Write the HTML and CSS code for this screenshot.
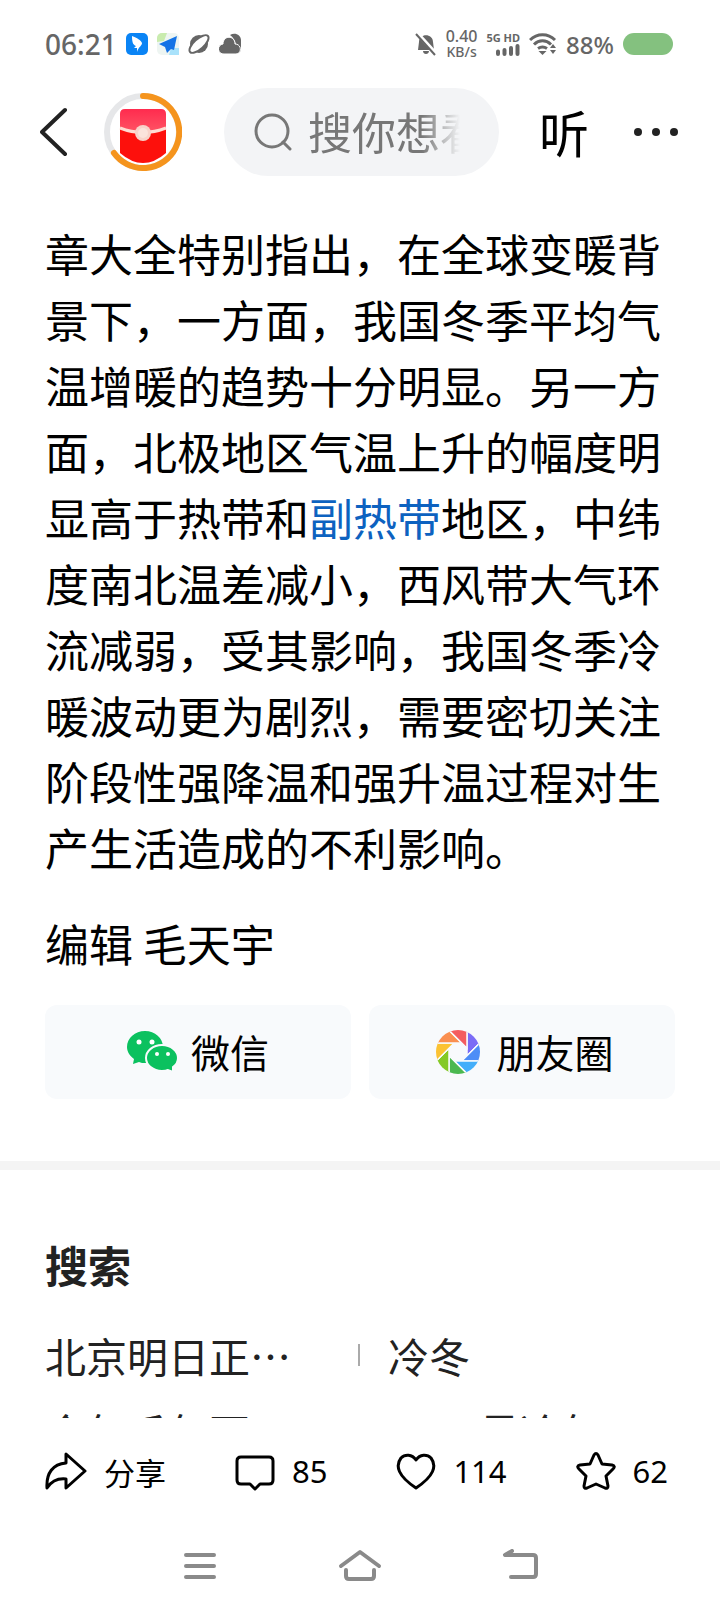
FILE: index.html
```html
<!DOCTYPE html>
<html lang="zh-CN">
<head>
    <meta charset="UTF-8">
    <meta name="viewport" content="width=device-width, initial-scale=1.0">
    <title>新闻详情</title>
    <link rel="stylesheet" href="styles.css">
</head>
<body>
    <!-- 状态栏 -->
    <div class="status-bar">
        <span class="time">06:21</span>
        <svg width="22" height="22" viewBox="0 0 22 22">
            <rect width="22" height="22" rx="5" fill="#0a84f5"/>
            <path d="M6 3c5 2 9 4 10 7 0 3-3 3-5 9l0-4-3 0 2-2c-3-1-4-4-4-10z" fill="#fff"/>
        </svg>
        <svg width="22" height="22" viewBox="0 0 22 22">
            <rect width="22" height="22" rx="5" fill="#eef5f2"/>
            <path d="M0 9V5a5 5 0 0 1 5-5h5L7 8z" fill="#c9ecae"/>
            <path d="M12 22l2-7h8v7z" fill="#a9e2fb"/>
            <path d="M20 3L2 11l6 3 2 6 4-4 3 1z" fill="#1473e6"/>
        </svg>
        <svg width="22" height="22" viewBox="0 0 22 22">
            <circle cx="11" cy="11" r="9" fill="#666"/>
            <ellipse cx="11" cy="11" rx="12" ry="5" transform="rotate(-42 11 11)" fill="#fff" stroke="#666" stroke-width="2"/>
        </svg>
        <svg width="23" height="22" viewBox="0 0 23 22">
            <path d="M11 2c5-3 11 0 11 5v12c-1-4-3-6-5-7-1-5-3-8-6-10z" fill="#666"/>
            <path d="M5 21a5 5 0 0 1-1-10c0-9 12-9 12 0 7 0 7 10 1 10z" fill="#666" stroke="#fff"/>
        </svg>
        <div class="status-right">
            <svg width="22" height="24" viewBox="0 0 22 24">
                <path d="M3 18l1-8c0-9 14-9 14 0l1 8zM8 19h6c0 4-6 4-6 0z" fill="#666"/>
                <path d="M2 1l19 21" stroke="#fff" stroke-width="4"/>
                <path d="M1 2l19 21" stroke="#666" stroke-width="2"/>
            </svg>
            <div class="speed">
                <span>0.40</span>
                <span class="unit">KB/s</span>
            </div>
            <div class="signal">
                <span>5G HD</span>
                <svg width="24" height="12" viewBox="0 0 24 12">
                    <path d="M2 7.500v2.500M8.500 6v4M15 4v6M21.500 2v8" stroke="#666" stroke-width="4" stroke-linecap="round"/>
                </svg>
            </div>
            <svg class="wifi" width="28" height="24" viewBox="0 0 28 24">
                <path d="M1 8c7-7 18-7 25 0M5 12.500c5-5 12-5 17 0M9 16.500c3-2 6-2 9 0" fill="none" stroke="#666" stroke-width="3"/>
                <path d="M9.500 19h8l-4 4zM21 16l3-4 3 4zM21 18h6l-3 4z" fill="#666"/>
            </svg>
            <span class="percent">88%</span>
            <span class="battery"></span>
        </div>
    </div>

    <!-- 顶部导航 -->
    <header class="header">
        <button class="icon-btn" aria-label="返回">
            <svg width="28" height="50" viewBox="0 0 28 50">
                <path d="M25 3L2 25l23 22" fill="none" stroke="#222" stroke-width="4" stroke-linecap="round" stroke-linejoin="round"/>
            </svg>
        </button>
        <button class="icon-btn packet" aria-label="红包">
            <svg width="78" height="78" viewBox="0 0 78 78">
                <defs>
                    <linearGradient id="flap" x1="0" y1="0" x2="0" y2="1">
                        <stop offset="0" stop-color="#ff2b4e"/>
                        <stop offset="1" stop-color="#ff5565"/>
                    </linearGradient>
                </defs>
                <circle cx="39" cy="39" r="36" fill="#fff" stroke="#e6e7e9" stroke-width="6"/>
                <path d="M39 3a36 36 0 1 1-29 57" fill="none" stroke="#f5941d" stroke-width="6" stroke-linecap="round"/>
                <path d="M16 35h46v25q-23 20-46 0z" fill="#fd100c"/>
                <path d="M16 21q0-5 5-5h36q5 0 5 5v15q-23 8-46 0z" fill="url(#flap)"/>
                <path d="M16 35q23 9 46 0" fill="none" stroke="#ffdcd2" stroke-width="3"/>
                <circle cx="39" cy="40" r="8" fill="#f8d3ca"/>
                <circle cx="39" cy="40" r="5" fill="#fbe3dc"/>
            </svg>
        </button>
        <label class="search">
            <svg width="38" height="38" viewBox="0 0 38 38">
                <circle cx="18" cy="18" r="16" fill="none" stroke="#777" stroke-width="3"/>
                <path d="M29 29l7 7" stroke="#777" stroke-width="3" stroke-linecap="round"/>
            </svg>
            <input type="text" placeholder="搜你想看的" aria-label="搜索">
        </label>
        <button class="listen">听</button>
        <button class="icon-btn" aria-label="更多">
            <svg width="46" height="10" viewBox="0 0 46 10">
                <circle cx="5" cy="5" r="4" fill="#222"/>
                <circle cx="23" cy="5" r="4" fill="#222"/>
                <circle cx="41" cy="5" r="4" fill="#222"/>
            </svg>
        </button>
    </header>

    <!-- 正文 -->
    <main class="content">
        <article class="article">
            <p>章大全特别指出，在全球变暖背景下，一方面，我国冬季平均气温增暖的趋势十分明显。另一方面，北极地区气温上升的幅度明显高于热带和<a href="#">副热带</a>地区，中纬度南北温差减小，西风带大气环流减弱，受其影响，我国冬季冷暖波动更为剧烈，需要密切关注阶段性强降温和强升温过程对生产生活造成的不利影响。</p>
            <p>编辑 毛天宇</p>
        </article>

        <div class="share">
            <button class="share-btn">
                <svg width="52" height="42" viewBox="0 0 52 42">
                    <path d="M18 0c10 0 18 7 18 16s-8 16-18 16c-2 0-4 0-6-1l-6 2 1-5C3 25 0 21 0 16 0 7 8 0 18 0z" fill="#0bc15f"/>
                    <path d="M35 14c9 0 16 6 16 13 0 4-2 7-5 9l0 5-5-2c-2 1-4 1-6 1-9 0-16-6-16-13s7-13 16-13z" fill="#0bc15f" stroke="#f8fafc" stroke-width="2"/>
                    <g fill="#fff">
                        <circle cx="12" cy="11" r="2.500"/>
                        <circle cx="25" cy="11" r="2.500"/>
                        <circle cx="30" cy="23" r="2"/>
                        <circle cx="41" cy="23" r="2"/>
                    </g>
                </svg>
                <span>微信</span>
            </button>
            <button class="share-btn moments">
                <svg width="44" height="44" viewBox="-22 -22 44 44">
                    <defs>
                        <clipPath id="lens"><circle r="22"/></clipPath>
                        <path id="blade" d="M9 3.700V-30H34V-21.300z"/>
                    </defs>
                    <g clip-path="url(#lens)" stroke="#f8fafc" stroke-width="1.500">
                        <use href="#blade" fill="#7b6cf6"/>
                        <use href="#blade" fill="#4d8df7" transform="rotate(45)"/>
                        <use href="#blade" fill="#43aefa" transform="rotate(90)"/>
                        <use href="#blade" fill="#4bb850" transform="rotate(135)"/>
                        <use href="#blade" fill="#85c926" transform="rotate(180)"/>
                        <use href="#blade" fill="#fbc233" transform="rotate(225)"/>
                        <use href="#blade" fill="#fa8f50" transform="rotate(270)"/>
                        <use href="#blade" fill="#f45d60" transform="rotate(315)"/>
                    </g>
                </svg>
                <span>朋友圈</span>
            </button>
        </div>

        <section class="related">
            <h2>搜索</h2>
            <div class="related-list">
                <a href="#">北京明日正⋯</a>
                <a href="#">冷冬</a>
                <a href="#">今年千年不⋯</a>
                <a href="#">2025最冷年</a>
            </div>
        </section>
    </main>

    <!-- 底部操作栏 -->
    <footer class="footer">
        <div class="actions">
            <button class="action">
                <svg width="42" height="40" viewBox="0 0 42 40">
                    <path d="M21 3l19 17-19 17v-9C12 27 6 31 2 37 1 22 8 13 21 12z"/>
                </svg>
                分享
            </button>
            <button class="action">
                <svg width="40" height="40" viewBox="0 0 40 40">
                    <path d="M6 6h28q4 0 4 4v19q0 4-4 4h-9l-5 5-5-5H6q-4 0-4-4V10q0-4 4-4z"/>
                </svg>
                85
            </button>
            <button class="action">
                <svg width="40" height="40" viewBox="0 0 40 40">
                    <path d="M20 9C16 3 9 3 5 7-1 15 2 25 20 37 38 25 41 15 35 7 31 3 24 3 20 9z"/>
                </svg>
                114
            </button>
            <button class="action">
                <svg width="40" height="40" viewBox="0 0 40 40">
                    <path d="M18 4q2-3 4 0l4 9 10 1q4 1 1 4l-7 7 2 10q0 3-3 2l-9-4-9 4q-3 1-3-2l2-10-7-7q-3-3 1-4l10-1z"/>
                </svg>
                62
            </button>
        </div>
        <nav class="system-nav">
            <button class="icon-btn" aria-label="最近任务">
                <svg width="34" height="34" viewBox="0 0 34 34">
                    <path d="M3 6h28M3 17h28M3 28h28"/>
                </svg>
            </button>
            <button class="icon-btn" aria-label="主页">
                <svg width="44" height="36" viewBox="0 0 44 36">
                    <path d="M3 18L22 4l19 14M8 22v6q0 3 3 3h22q3 0 3-3v-6"/>
                </svg>
            </button>
            <button class="icon-btn" aria-label="返回上一页">
                <svg width="36" height="34" viewBox="0 0 36 34">
                    <path d="M10 2L3 6h28q3 0 3 3v16q0 3-3 3H9"/>
                </svg>
            </button>
        </nav>
    </footer>
</body>
</html>
```
FILE: styles.css
```css
* {
    box-sizing: border-box;
}
body {
    font-family: "Noto Sans CJK SC", sans-serif;
    margin: 0;
    background-color: #fff;
    color: #000;
    display: flex;
    flex-direction: column;
    height: 100vh;
    overflow: hidden;
}
button {
    border: none;
    background: none;
    padding: 0;
    font-family: inherit;
    color: inherit;
    cursor: pointer;
}
a {
    text-decoration: none;
}
svg {
    display: block;
    flex-shrink: 0;
}
.icon-btn {
    display: flex;
    align-items: center;
    justify-content: center;
}

/* Barra de estado */
.status-bar {
    display: flex;
    align-items: center;
    gap: 9px;
    height: 88px;
    padding: 0 47px 0 45px;
    font-family: "Noto Sans", sans-serif;
    color: #666;
}
.time {
    font-size: 28px;
    font-weight: 500;
}
.status-right {
    display: flex;
    align-items: center;
    gap: 9px;
    margin-left: auto;
}
.speed {
    display: flex;
    flex-direction: column;
    align-items: center;
    font-size: 16px;
    font-weight: 500;
    line-height: 16px;
}
.unit {
    font-size: 14px;
}
.signal {
    display: flex;
    flex-direction: column;
    align-items: flex-end;
    font-size: 11px;
    font-weight: 700;
    line-height: 12px;
}
.percent {
    font-size: 24px;
    font-weight: 500;
}
.battery {
    width: 50px;
    height: 22px;
    border-radius: 11px;
    background-color: #84c17f;
}

/* Cabecera */
.header {
    display: flex;
    align-items: center;
    height: 88px;
    padding: 0 41px 0 40px;
}
.packet {
    margin: 0 42px 0 36px;
}
.search {
    flex: 1;
    min-width: 0;
    display: flex;
    align-items: center;
    gap: 16px;
    height: 88px;
    padding: 0 39px 0 30px;
    border-radius: 44px;
    background-color: #f3f4f6;
}
.search input {
    flex: 1;
    min-width: 0;
    height: 66px;
    padding: 0 0 2px;
    border: none;
    outline: none;
    background: none;
    font-family: inherit;
    font-size: 44px;
    color: #222;
    -webkit-mask-image: linear-gradient(to right, #000 75%, transparent);
    mask-image: linear-gradient(to right, #000 75%, transparent);
}
.search input::placeholder {
    color: #777;
}
.listen {
    margin: 0 44px 0 40px;
    padding-bottom: 2px;
    font-size: 50px;
    font-weight: 400;
    line-height: 66px;
}

/* Contenido */
.content {
    flex: 1;
    min-height: 0;
    overflow: hidden;
}
.article {
    padding: 44px 45px 0;
    font-size: 44px;
    line-height: 66px;
}
.article p {
    margin: 0 0 30px;
}
.article a {
    color: #0d62c0;
}
.share {
    display: grid;
    grid-template-columns: 1fr 1fr;
    gap: 18px;
    padding: 0 45px 62px;
    margin-top: -1px;
}
.share-btn {
    display: flex;
    align-items: center;
    justify-content: center;
    gap: 12px;
    height: 94px;
    border-radius: 12px;
    background-color: #f8fafc;
    font-size: 39px;
}
.share-btn span {
    padding-bottom: 3px;
}
.moments {
    gap: 16px;
    padding-left: 6px;
}
.related {
    padding: 61px 45px 0;
    border-top: 9px solid #f4f4f4;
    color: #222;
}
.related h2 {
    margin: 0 0 20px;
    font-size: 43px;
    line-height: 66px;
}
.related-list {
    display: grid;
    grid-template-columns: 1fr 1fr;
    font-size: 41px;
    line-height: 76px;
}
.related-list a {
    display: flex;
    align-items: center;
    color: #222;
    white-space: nowrap;
}
.related-list a:nth-child(even)::before {
    content: "";
    width: 2px;
    height: 22px;
    margin: 0 28px 0 -2px;
    background-color: #aaa;
}

/* Pie */
.footer {
    background-color: #fff;
}
.actions {
    display: flex;
    justify-content: space-between;
    align-items: center;
    height: 106px;
    padding: 0 52px 0 45px;
}
.action {
    display: flex;
    align-items: center;
    gap: 17px;
    font-family: "Noto Sans", "Noto Sans CJK SC", sans-serif;
    font-size: 31px;
}
.action svg {
    fill: none;
    stroke: #000;
    stroke-width: 3;
    stroke-linejoin: round;
}
.system-nav {
    display: flex;
    height: 84px;
    padding: 0 120px;
}
.system-nav .icon-btn {
    flex: 1;
}
.system-nav svg {
    fill: none;
    stroke: #8a8a8a;
    stroke-width: 4;
    stroke-linecap: round;
    stroke-linejoin: round;
}
```
